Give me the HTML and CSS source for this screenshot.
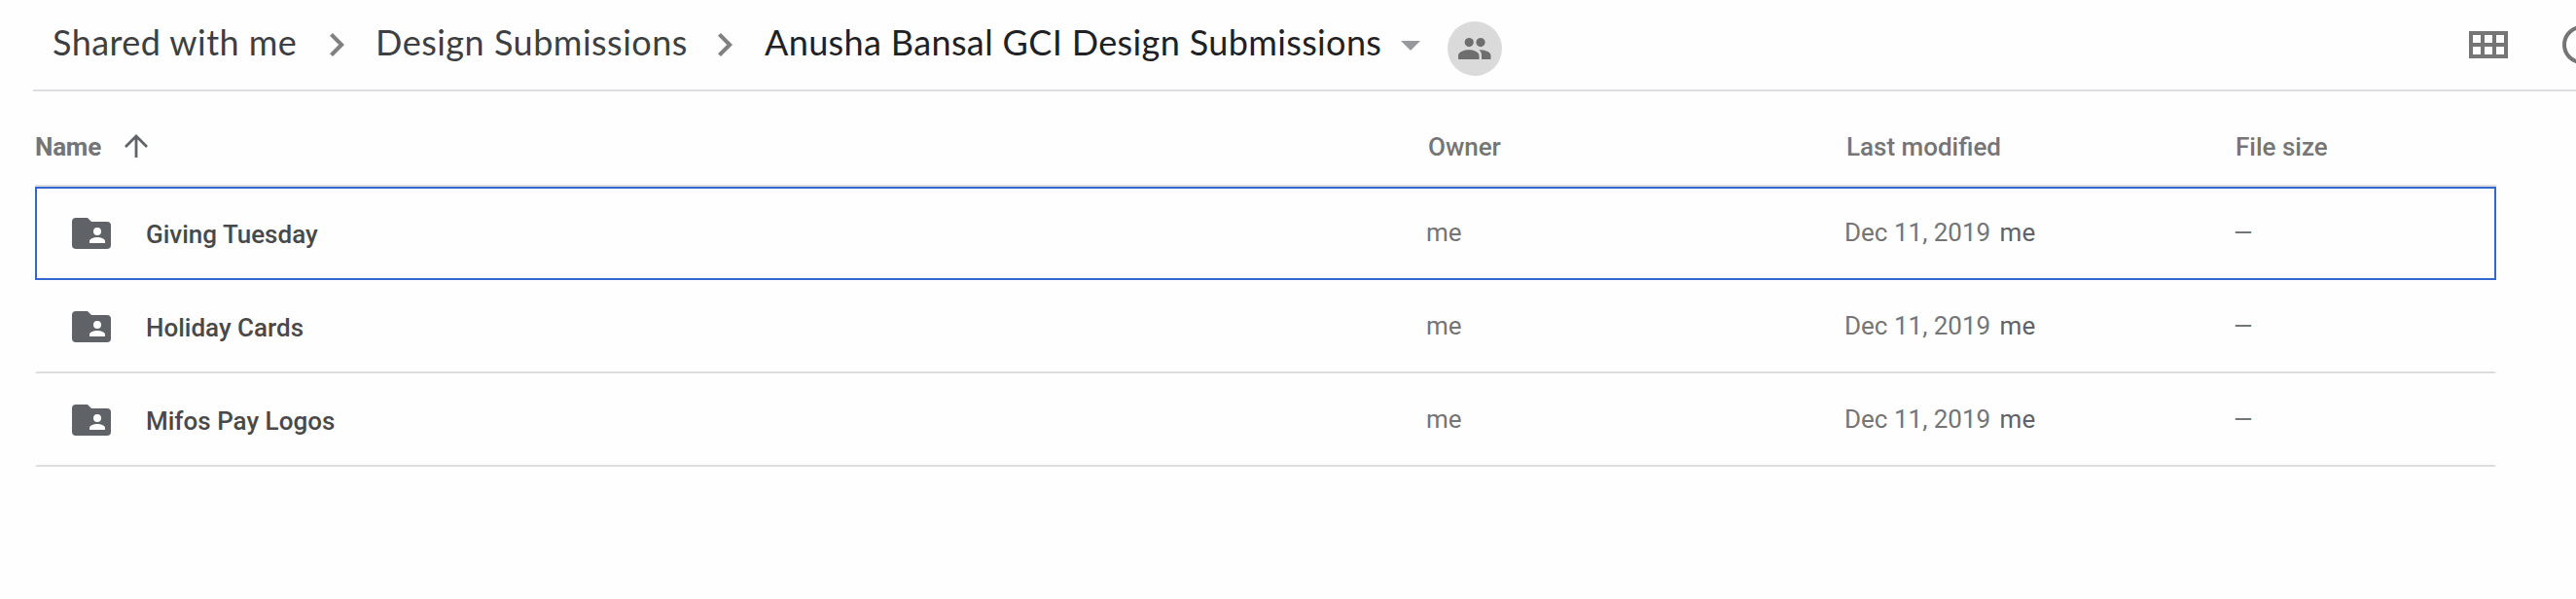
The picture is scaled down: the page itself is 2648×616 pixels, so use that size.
FILE: index.html
```html
<!DOCTYPE html>
<html lang="en">
<head>
<meta charset="utf-8">
<title>Design Submissions</title>
<link rel="stylesheet" href="styles.css">
</head>
<body>
<svg class="defs" width="0" height="0">
  <symbol id="folder" viewBox="0 0 40 32"><path fill-rule="evenodd" d="M4 0H16L20 4H36a4 4 0 0 1 4 4V28a4 4 0 0 1-4 4H4a4 4 0 0 1-4-4V4a4 4 0 0 1 4-4ZM26 10a4 4 0 1 0 0 8a4 4 0 1 0 0-8ZM18 26H34V24c0-2.7-5.3-4-8-4s-8 1.300-8 4Z"/></symbol>
  <symbol id="chevron" viewBox="0 0 15 24"><path d="M3 0 0 2.800 9.200 12 0 21.200 3 24 15 12Z"/></symbol>
</svg>
<header class="topbar">
  <nav class="crumbs">
    <a class="crumb shared">Shared with me</a>
    <svg class="chevron"><use href="#chevron"/></svg>
    <a class="crumb parent">Design Submissions</a>
    <svg class="chevron"><use href="#chevron"/></svg>
    <a class="crumb current">Anusha Bansal GCI Design Submissions</a>
    <svg class="caret" viewBox="0 0 20 10"><path d="M0 0H20L10 10Z"/></svg>
    <span class="people"><svg viewBox="0 0 34 22"><circle cx="11.200" cy="4.600" r="4.600"/><circle cx="23" cy="4.600" r="4.600"/><path d="M0 22V18C0 14 7 12.200 11 12.200S21.500 14 21.500 18V22ZM24 22V18C24 15.500 23 13.700 21.500 12.300C26 12 33.500 14 33.500 18V22Z"/></svg></span>
  </nav>
  <div class="tools">
    <svg class="grid" viewBox="0 0 40 28"><path fill-rule="evenodd" d="M0 0H40V28H0ZM4 4V12H12V4ZM16 4V12H24V4ZM28 4V12H36V4ZM4 16V24H12V16ZM16 16V24H24V16ZM28 16V24H36V16Z"/></svg>
    <svg class="info" viewBox="0 0 40 40"><circle cx="20" cy="20" r="18"/></svg>
  </div>
</header>
<main class="list">
  <div class="row head">
    <span class="name">Name <svg class="arrow" viewBox="0 0 24 24"><path d="M12 24V2M1 13 12 2 23 13"/></svg></span>
    <span>Owner</span><span>Last modified</span><span>File size</span>
  </div>
  <div class="row item selected">
    <span class="name"><svg class="folder"><use href="#folder"/></svg>Giving Tuesday</span>
    <span class="meta">me</span><span class="meta">Dec 11, 2019 <b class="who">me</b></span><span class="meta size">—</span>
  </div>
  <div class="row item">
    <span class="name"><svg class="folder"><use href="#folder"/></svg>Holiday Cards</span>
    <span class="meta">me</span><span class="meta">Dec 11, 2019 <b class="who">me</b></span><span class="meta size">—</span>
  </div>
  <div class="row item">
    <span class="name"><svg class="folder"><use href="#folder"/></svg>Mifos Pay Logos</span>
    <span class="meta">me</span><span class="meta">Dec 11, 2019 <b class="who">me</b></span><span class="meta size">—</span>
  </div>
</main>
</body>
</html>
```
FILE: styles.css
```css
* { box-sizing: border-box; }
body { margin: 0; height: 616px; background: #fefefe; font-family: Roboto, "Liberation Sans", sans-serif; overflow: hidden; }
svg { display: block; flex: none; }
.defs { position: absolute; }
.topbar { display: flex; justify-content: space-between; margin-left: 34px; height: 94px; border-bottom: 2px solid #dcdce1; }
.crumbs { display: flex; align-items: center; height: 92px; padding-left: 20px; }
.crumb { font-family: Lato, "Open Sans", sans-serif; font-size: 36px; line-height: 48px; margin-top: -7px; color: #3c4043; white-space: nowrap; letter-spacing: 0.45px; }
.shared { width: 285px; }
.parent { width: 352px; letter-spacing: 0.5px; }
.current { width: 654px; color: #202124; letter-spacing: 0.37px; }
.chevron { width: 15px; height: 24px; margin-right: 33px; fill: #808080; }
.shared + .chevron { margin-right: 32px; }
.caret { width: 20px; height: 10px; margin-top: 2px; fill: #97999d; }
.people { display: flex; align-items: center; justify-content: center; width: 56px; height: 56px; margin: 8px 0 0 28px; border-radius: 50%; background: #dadada; }
.people svg { width: 34px; height: 22px; fill: #6e6e6e; }
.tools { display: flex; align-items: center; height: 92px; gap: 56px; margin-right: -26px; }
.grid { width: 40px; height: 28px; fill: #757575; }
.info { width: 40px; height: 40px; fill: none; stroke: #757575; stroke-width: 4; }
.list { width: 2530px; margin-left: 36px; font-size: 26px; line-height: 32px; }
.row { display: grid; grid-template-columns: 1432px 430px 400px 1fr; align-items: center; }
.head { height: 98px; padding: 17px 0 0 0; border-bottom: 2px solid #dcdce1; color: #757575; font-weight: 500; }
.head .name { font-weight: 700; letter-spacing: -0.2px; }
.name { display: flex; align-items: center; }
.arrow { width: 24px; height: 24px; margin: -1px 0 0 24px; fill: none; stroke: #5f6368; stroke-width: 2.800; }
.item { height: 96px; padding-left: 36px; border: 2px solid transparent; border-bottom-color: #dcdce1; grid-template-columns: 1392px 430px 400px 1fr; }
.item .name { font-weight: 500; color: #494949; padding-top: 2px; }
.selected { border-color: #3367d0; }
.folder { width: 40px; height: 32px; margin: -2px 36px 0 0; fill: #5f6368; }
.meta { color: #757575; margin-top: -2px; }
.size { font-size: 25px; margin-top: 0; }
.who { font-weight: 400; color: #5f6368; margin-left: 3px; }
```
